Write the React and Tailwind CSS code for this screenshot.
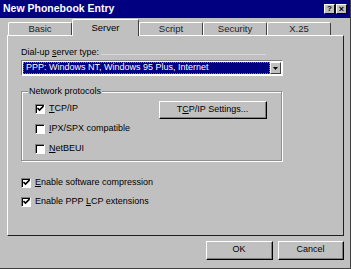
import React from 'react';

const tabs = ['Basic', 'Server', 'Script', 'Security', 'X.25'];

const Check = ({ checked }) => (
  <span className="w-[10px] h-[10px] bg-white border-t border-l border-t-[#808080] border-l-[#808080] border-b border-r border-b-white border-r-white flex items-center justify-center shadow-[inset_1px_1px_0_#000]">
    {checked && (
      <svg width="7" height="7" viewBox="0 0 7 7">
        <path d="M0.5 3 L2.5 5 L6.5 1" stroke="#000" strokeWidth="1.6" fill="none" />
      </svg>
    )}
  </span>
);

const Row = ({ checked, pre, u, post, className = '' }) => (
  <div className={`flex items-center gap-[4px] leading-[11px] whitespace-nowrap ${className}`}>
    <Check checked={checked} />
    <span>
      {pre}
      <span className="underline">{u}</span>
      {post}
    </span>
  </div>
);

const Button = ({ children, className }) => (
  <div className={`border-t border-l border-white border-b border-r border-b-black border-r-black ${className}`}>
    <div className="w-full h-full border-b border-r border-b-[#808080] border-r-[#808080] flex items-center justify-center">
      {children}
    </div>
  </div>
);

export default function App() {
  return (
    <div className="w-[351px] h-[269px] bg-[#c0c0c0] text-[9px] text-black font-['Liberation_Sans',Arial,sans-serif] flex flex-col border-r border-b border-r-[#404040] border-b-[#404040] overflow-hidden">
      <div className="h-[18px] bg-[#000080] flex items-center justify-between pl-[3px] pr-[3px]">
        <span className="text-white font-bold text-[10.5px]">New Phonebook Entry</span>
        <div className="flex gap-[1px]">
          <div className="w-[11px] h-[10px] bg-[#c0c0c0] border-b border-r border-b-black border-r-black border-t border-l border-t-white border-l-white flex items-center justify-center text-[8px] font-bold leading-none">?</div>
          <div className="w-[11px] h-[10px] bg-[#c0c0c0] border-b border-r border-b-black border-r-black border-t border-l border-t-white border-l-white flex items-center justify-center text-[9px] font-bold leading-none">×</div>
        </div>
      </div>

      <div className="flex items-end h-[17px] pl-[8px]">
        {tabs.map((t) => (
          <div
            key={t}
            className={
              t === 'Server'
                ? 'w-[67px] h-[17px] bg-[#c0c0c0] border-t border-l border-r border-t-white border-l-white border-r-[#404040] rounded-t-[2px] flex items-center justify-center text-[9.5px] relative z-10 -mb-[1px]'
                : 'w-[64px] h-[13px] bg-[#c0c0c0] border-t border-l border-r border-t-white border-l-white border-r-[#404040] rounded-t-[2px] flex items-center justify-center text-[9.5px] text-[#222]'
            }
          >
            {t}
          </div>
        ))}
      </div>

      <div className="ml-[7px] w-[337px] h-[201px] border-t border-l border-t-white border-l-white border-r border-b border-r-[#202020] border-b-[#202020] pl-[13px] pt-[11px] flex flex-col">
        <div className="flex items-center gap-[2px] leading-[11px]">
          <span>
            Dial-up <span className="underline">s</span>erver type:
          </span>
          <div className="h-px w-[165px] bg-[#d8d8d8] mt-[4px]" />
        </div>
        <div className="mt-[2px] w-[262px] h-[16px] bg-white border-t border-l border-t-[#808080] border-l-[#808080] border-b border-r border-b-white border-r-white p-[1px] flex">
          <div className="flex-1 bg-[#000080] text-white flex items-center pl-[2px] border border-dotted border-[#808080]">
            PPP: Windows NT, Windows 95 Plus, Internet
          </div>
          <div className="w-[11px] bg-[#c0c0c0] border-t border-l border-white border-b border-r border-b-[#404040] border-r-[#404040] flex items-center justify-center">
            <svg width="5" height="3" viewBox="0 0 5 3">
              <path d="M0 0 H5 L2.5 3 Z" fill="#000" />
            </svg>
          </div>
        </div>

        <div className="mt-[15px] w-[261px] h-[70px] border border-[#909090] shadow-[1px_1px_0_#fff,inset_1px_1px_0_#fff] relative flex">
          <span className="absolute -top-[6px] left-[6px] bg-[#c0c0c0] px-[1px] leading-[10px]">Network protocols</span>
          <div className="w-[137px] shrink-0 flex flex-col pl-[13px] pt-[11px] gap-[9px]">
            <Row checked pre="" u="T" post="CP/IP" />
            <Row pre="" u="I" post="PX/SPX compatible" />
            <Row pre="" u="N" post="etBEUI" />
          </div>
          <Button className="mt-[9px] w-[108px] h-[18px]">
            <span>
              T<span className="underline">C</span>P/IP Settings...
            </span>
          </Button>
        </div>

        <Row checked pre="" u="E" post="nable software compression" className="mt-[16px]" />
        <Row checked pre="Enable PPP " u="L" post="CP extensions" className="mt-[8px]" />
      </div>

      <div className="flex justify-end gap-[5px] pr-[6px] mt-[5px]">
        <Button className="w-[67px] h-[19px]">OK</Button>
        <Button className="w-[66px] h-[19px]">Cancel</Button>
      </div>
    </div>
  );
}
